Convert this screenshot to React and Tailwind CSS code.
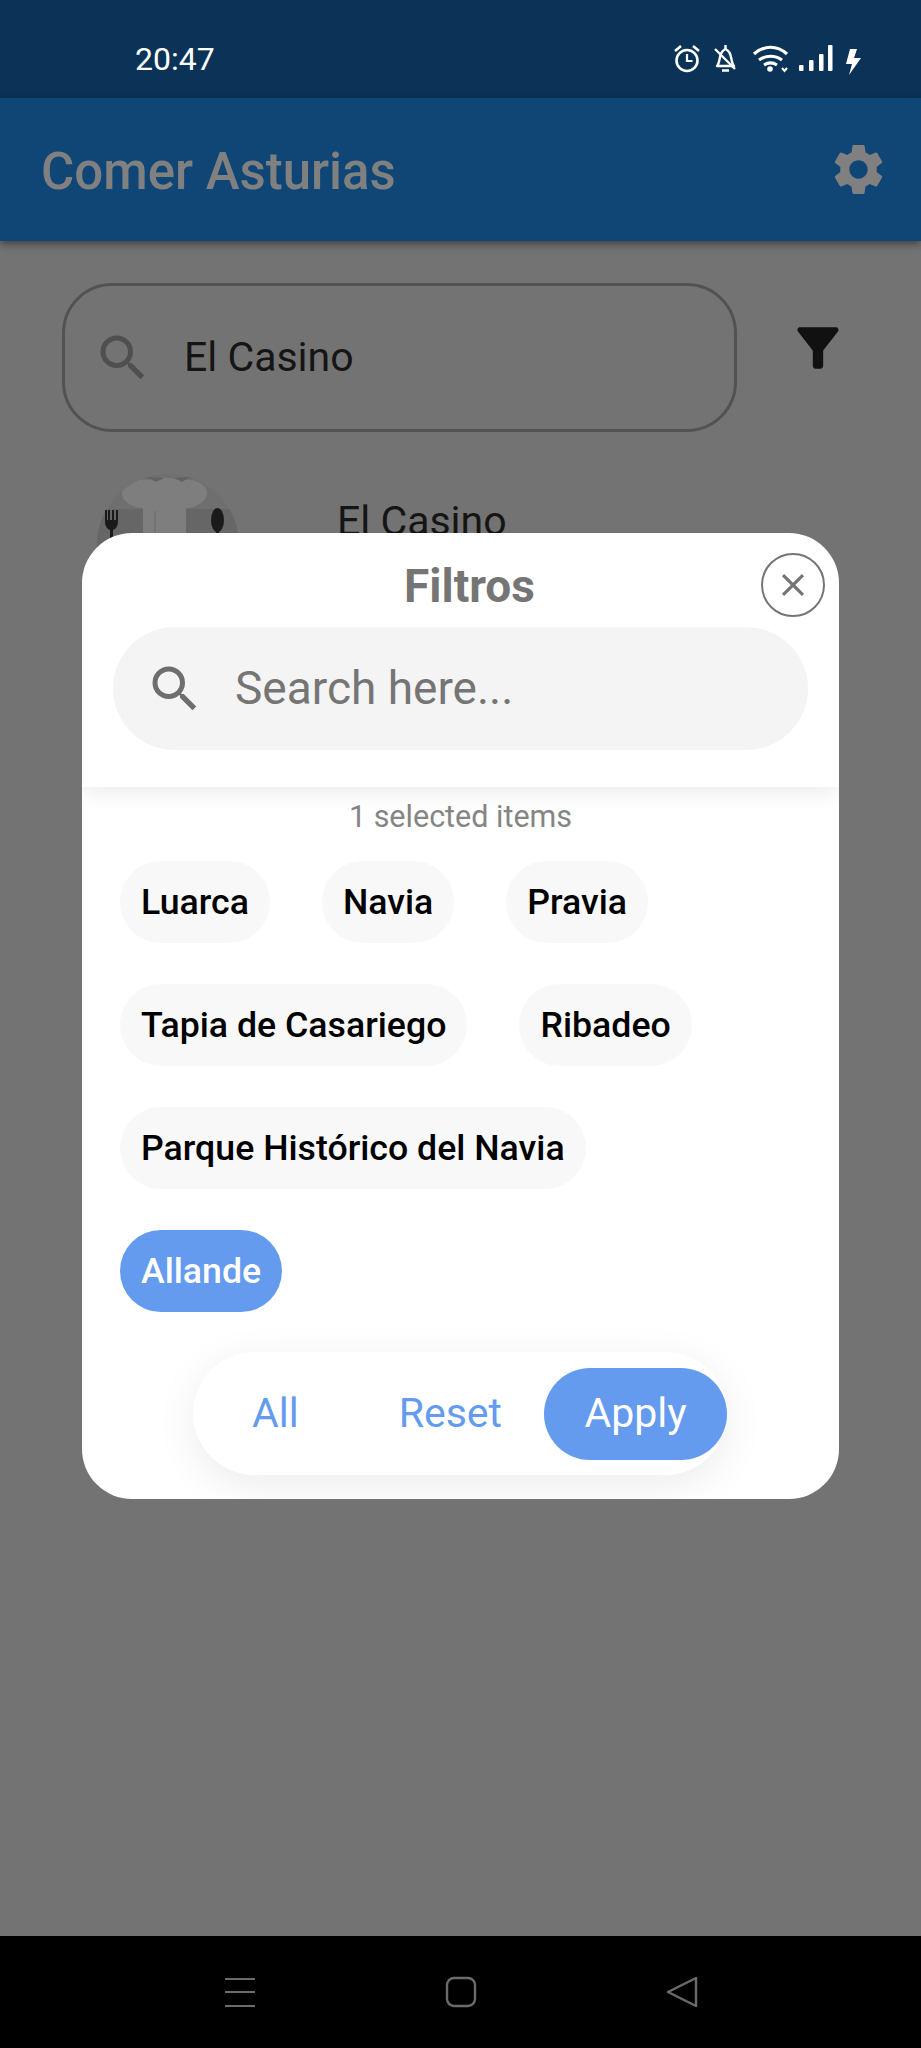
import React from "react";
import { MdSearch, MdSettings, MdFilterAlt, MdClose } from "react-icons/md";

const locations = [
  ["Luarca", "Navia", "Pravia"],
  ["Tapia de Casariego", "Ribadeo"],
  ["Parque Histórico del Navia"],
];

const StatusIcons = () => (
  <svg width="195" height="36" viewBox="0 0 195 36" fill="none" className="block">
    {/* alarm */}
    <circle cx="17" cy="19.500" r="10.500" stroke="white" strokeWidth="2.600" />
    <path d="M17 13v7h5.500" stroke="white" strokeWidth="2.200" />
    <path d="M5 10l6-5M29 10l-6-5" stroke="white" strokeWidth="2.600" />
    {/* muted bell */}
    <path d="M47 25c4-4 1-14 8.500-17 7.500 3 4.500 13 8.500 17z" stroke="white" strokeWidth="2.400" strokeLinejoin="round" />
    <path d="M55.500 4v4M52 29.500h7M45 8l20 20" stroke="white" strokeWidth="2.400" />
    {/* wifi */}
    <path d="M84 13c10-9 23-9 33 0M89 19c7-5 16-5 23 0M94 24c4-2.500 9-2.500 13 0" stroke="white" strokeWidth="3.200" />
    <circle cx="100" cy="28" r="2.800" fill="white" />
    <path d="M112 27l2.500 3 2.500-3" stroke="white" strokeWidth="2" />
    {/* signal */}
    <rect x="129" y="24" width="4.500" height="6" rx="1" fill="white" />
    <rect x="139" y="19" width="4.500" height="11" rx="1" fill="white" />
    <rect x="149" y="13" width="4.500" height="17" rx="1" fill="white" />
    <rect x="158" y="4" width="4.500" height="26" rx="1" fill="white" />
    {/* charging bolt */}
    <path d="M187 8h-7l-4 15h6l-3 11 12-17h-7z" fill="white" />
  </svg>
);

const ChefAvatar = () => (
  <svg width="144" height="144" viewBox="0 0 144 144" className="block">
    <defs>
      <clipPath id="avatar-circle">
        <circle cx="72" cy="72" r="71" />
      </clipPath>
    </defs>
    <circle cx="72" cy="72" r="71" fill="#6f6f6f" />
    <g clipPath="url(#avatar-circle)">
      <path d="M0 36h144v80H0z" fill="#666666" />
      <path d="M26 20c0-10 14-15 26-13 6-3 26-3 32 0 14-2 27 4 27 13 0 9-12 15-21 15v75H47V35c-9 0-21-6-21-15z" fill="#7e7e7e" />
      <path d="M50 4l10 5 8-4zM78 5l8 4 8-5z" fill="#626262" />
      <rect x="58" y="38" width="2" height="60" fill="#747474" />
    </g>
    <path d="M9 37v11c0 5 2 8 5 9v30h3V57c3-1 5-4 5-9V37h-2v10h-2V37h-2v10h-2V37h-2v10H11V37z" fill="#1a1a1a" />
    <ellipse cx="121.500" cy="47" rx="6.500" ry="12" fill="#1a1a1a" />
    <rect x="120" y="56" width="3" height="30" fill="#1a1a1a" />
  </svg>
);

export default function App() {
  return (
    <div className="relative flex h-[2048px] w-[921px] flex-col overflow-hidden bg-[#737373] font-['Roboto',sans-serif]">
      <div className="flex h-[98px] items-center justify-between bg-[#0a3357] pl-[135px] pr-[56px] pt-[20px] text-white">
        <span className="text-[32px]">20:47</span>
        <StatusIcons />
      </div>
      <div className="flex h-[143px] items-center justify-between bg-[#0f4675] pl-[41px] pr-[32px] shadow-[0_3px_8px_rgba(0,0,0,0.45)]">
        <span className="pt-[6px] text-[51px] font-medium text-[#808080]">Comer Asturias</span>
        <MdSettings size={61} color="#808080" />
      </div>

      <div className="flex-1 px-[62px] pt-[42px]">
        <div className="flex items-start">
          <div className="flex h-[149px] w-[675px] items-center rounded-[50px] border-[3px] border-[#525252] pl-[28px]">
            <MdSearch size={60} color="#4f4f4f" />
            <span className="ml-[31px] text-[41px] text-[#151515]">El Casino</span>
          </div>
          <MdFilterAlt size={62} color="#111111" className="ml-[50px] mt-[34px]" />
        </div>
        <div className="mt-[41px] flex items-start pl-[34px]">
          <ChefAvatar />
          <span className="ml-[97px] mt-[18px] text-[41px] text-[#151515]">El Casino</span>
        </div>
      </div>

      <div className="flex h-[112px] items-center justify-center gap-[189px] bg-black">
        <svg width="32" height="32" viewBox="0 0 32 32" fill="none" stroke="#6b6b6b" strokeWidth="2.200">
          <path d="M1 3h30M1 16h30M1 30h30" />
        </svg>
        <svg width="32" height="32" viewBox="0 0 32 32" fill="none" stroke="#6b6b6b" strokeWidth="2.400">
          <rect x="2" y="2" width="28" height="28" rx="7" />
        </svg>
        <svg width="32" height="32" viewBox="0 0 32 32" fill="none" stroke="#6b6b6b" strokeWidth="2.400" strokeLinejoin="round">
          <path d="M2 16L30 2v28z" />
        </svg>
      </div>

      {/* filter dialog */}
      <div className="absolute left-[82px] top-[533px] flex h-[966px] w-[757px] flex-col overflow-hidden rounded-[50px] bg-white">
        <div className="relative h-[254px] shadow-[0_6px_20px_rgba(0,0,0,0.08)]">
          <div className="pl-[18px] pt-[28px] text-center text-[46px] font-bold leading-[50px] text-[#757575]">Filtros</div>
          <div className="absolute right-[14px] top-[20px] flex h-[64px] w-[64px] items-center justify-center rounded-full border-2 border-[#757575]">
            <MdClose size={38} color="#757575" />
          </div>
          <div className="mx-[31px] mt-[16px] flex h-[123px] items-center rounded-[62px] bg-[#f4f4f4] pl-[32px]">
            <MdSearch size={60} color="#6e6e6e" />
            <span className="ml-[30px] text-[46px] text-[#757575]">Search here...</span>
          </div>
        </div>
        <div className="mt-[12px] text-center text-[30.500px] leading-[36px] text-[#858585]">1 selected items</div>
        <div className="mt-[26px] flex flex-col gap-[41px] pl-[38px]">
          {locations.map((row) => (
            <div key={row[0]} className="flex gap-[52px]">
              {row.map((name) => (
                <span key={name} className="flex h-[82px] items-center rounded-[41px] bg-[#f8f8f8] px-[21px] pt-[2px] text-[35.700px] font-medium text-black">
                  {name}
                </span>
              ))}
            </div>
          ))}
          <div className="flex">
            <span className="flex h-[82px] items-center rounded-[41px] bg-[#659bee] px-[21px] pt-[2px] text-[35.700px] font-medium text-white">Allande</span>
          </div>
        </div>
        <div className="ml-[111px] mt-[40px] flex h-[123px] w-[534px] items-center rounded-[62px] bg-white text-[41px] text-[#659bee] shadow-[0_10px_40px_rgba(0,0,0,0.08)]">
          <span className="ml-[59px]">All</span>
          <span className="ml-[100px]">Reset</span>
          <span className="ml-auto flex h-[92px] w-[183px] items-center justify-center rounded-[46px] bg-[#659bee] text-white">Apply</span>
        </div>
      </div>
    </div>
  );
}
